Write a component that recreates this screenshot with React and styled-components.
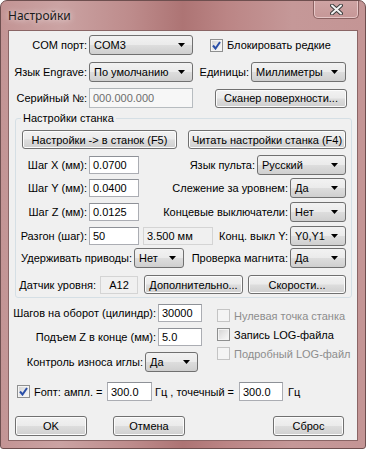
import React from "react";
import styled, { createGlobalStyle } from "styled-components";

const GlobalStyle = createGlobalStyle`
  html, body {
    margin: 0;
    padding: 0;
    background: #ffffff;
  }
  body {
    font-family: "Liberation Sans", Arial, sans-serif;
    font-size: 11px;
    color: #000000;
  }
`;

const Window = styled.div`
  width: 366px;
  height: 449px;
  box-sizing: border-box;
  border: 1px solid #6e4f4f;
  border-radius: 7px 7px 3px 3px;
  background: linear-gradient(
    90deg,
    #c39494 0%,
    #cba3a3 16%,
    #bd8b8b 36%,
    #ad7474 50%,
    #bb8585 62%,
    #c59898 80%,
    #c49595 100%
  );
  display: flex;
  flex-direction: column;
  overflow: hidden;
`;

const TitleBar = styled.div`
  height: 29px;
  display: flex;
  justify-content: space-between;
  align-items: flex-start;
`;

const Title = styled.div`
  padding-left: 7px;
  line-height: 29px;
  font-family: "Noto Sans", "Open Sans", sans-serif;
  font-size: 12px;
  color: #1a1a1a;
  text-shadow: 0 0 6px rgba(255, 255, 255, 0.9);
`;

const CloseButton = styled.div`
  width: 46px;
  height: 19px;
  margin: -1px 6px 0 0;
  box-sizing: border-box;
  border: 1px solid #8b6262;
  border-top: none;
  border-radius: 0 0 5px 5px;
  box-shadow: inset 0 0 0 1px rgba(255, 235, 235, 0.55);
  background: linear-gradient(180deg, #cfa4a4 0%, #c69797 100%);
  display: flex;
  align-items: center;
  justify-content: center;
`;

const Client = styled.div`
  margin: 0 7px;
  width: 350px;
  height: 411px;
  box-sizing: border-box;
  border: 1px solid #8a6565;
  background: #f0f0f0;
  display: flex;
  flex-direction: column;
`;

const Row = styled.div`
  display: flex;
  align-items: center;
  height: ${(p) => p.$h || 20}px;
  margin-top: ${(p) => p.$mt || 0}px;
  padding-left: ${(p) => p.$pl || 0}px;
`;

const Label = styled.div`
  flex: none;
  width: ${(p) => (p.$w ? `${p.$w}px` : "auto")};
  display: flex;
  justify-content: flex-end;
  padding-right: 2px;
  box-sizing: border-box;
  white-space: nowrap;
  color: ${(p) => (p.$disabled ? "#6d6d6d" : "#000000")};
`;

const Text = styled.span`
  flex: none;
  width: ${(p) => (p.$w ? `${p.$w}px` : "auto")};
  margin-left: ${(p) => p.$ml || 0}px;
  white-space: nowrap;
`;

const Right = styled.div`
  margin-left: auto;
  display: flex;
  align-items: center;
`;

const Combo = styled.div`
  flex: none;
  width: ${(p) => p.$w}px;
  height: 20px;
  box-sizing: border-box;
  border: 1px solid #707070;
  border-radius: 3px;
  background: linear-gradient(180deg, #f2f2f2 0%, #ebebeb 48%, #dddddd 52%, #cfcfcf 100%);
  display: flex;
  align-items: center;
  justify-content: space-between;
  padding: 0 7px 0 4px;
`;

const TextBox = styled.div`
  flex: none;
  width: ${(p) => p.$w}px;
  height: ${(p) => p.$h || 18}px;
  box-sizing: border-box;
  border: 1px solid ${(p) => (p.$disabled ? "#b7bcc0" : "#abadb3")};
  border-top-color: ${(p) => (p.$disabled ? "#adb2b5" : "#8e9197")};
  background: ${(p) => (p.$disabled ? "#f7f7f7" : "#ffffff")};
  color: ${(p) => (p.$disabled ? "#6d6d6d" : "#000000")};
  display: flex;
  align-items: center;
  padding-left: 3px;
  margin-left: ${(p) => p.$ml || 0}px;
`;

const StaticBox = styled.div`
  flex: none;
  width: ${(p) => p.$w}px;
  height: 18px;
  box-sizing: border-box;
  border: 1px solid #d4d4d4;
  background: #f0f0f0;
  display: flex;
  align-items: center;
  justify-content: ${(p) => (p.$center ? "center" : "flex-start")};
  padding-left: ${(p) => (p.$center ? 0 : 3)}px;
  margin-left: ${(p) => p.$ml || 0}px;
`;

const Button = styled.div`
  flex: none;
  width: ${(p) => p.$w}px;
  height: ${(p) => p.$h || 19}px;
  margin-left: ${(p) => (p.$auto ? "auto" : `${p.$ml || 0}px`)};
  margin-right: ${(p) => p.$mr || 0}px;
  box-sizing: border-box;
  border: 1px solid #707070;
  border-radius: 3px;
  box-shadow: inset 0 0 0 1px #fcfcfc;
  background: linear-gradient(180deg, #f2f2f2 0%, #ebebeb 48%, #dddddd 52%, #cfcfcf 100%);
  display: flex;
  align-items: center;
  justify-content: center;
  white-space: nowrap;
`;

const Check = styled.label`
  display: flex;
  align-items: center;
  height: 13px;
  margin-top: ${(p) => p.$mt || 0}px;
  color: ${(p) => (p.$disabled ? "#8d8d8d" : "#000000")};
  white-space: nowrap;
`;

const Box = styled.span`
  flex: none;
  width: 13px;
  height: 13px;
  box-sizing: border-box;
  margin-right: 4px;
  border: 1px solid ${(p) => (p.$disabled ? "#c4c4c4" : "#8e8f8f")};
  background: ${(p) =>
    p.$disabled
      ? "#f4f4f4"
      : "linear-gradient(135deg, #d2d2d2 0%, #e8e8e8 50%, #fafafa 100%)"};
  box-shadow: inset 0 0 0 1px #f4f4f4;
  display: flex;
  align-items: center;
  justify-content: center;
`;

const Group = styled.fieldset`
  margin: 4px 0 0 6px;
  width: 337px;
  box-sizing: border-box;
  border: 1px solid #d5dfe5;
  border-radius: 3px;
  padding: 0 5px 3px 6px;
  min-width: 0;
`;

const Legend = styled.legend`
  padding: 0 2px;
  margin-left: -1px;
  line-height: 13px;
  font-size: 11px;
`;

const Columns = styled.div`
  display: flex;
  align-items: flex-start;
`;

const LeftCol = styled.div`
  width: 193px;
  display: flex;
  flex-direction: column;
`;

const RightCol = styled.div`
  padding-left: 15px;
  padding-top: 11px;
  display: flex;
  flex-direction: column;
  gap: 6px;
`;

const Arrow = () => (
  <svg width="7" height="4" viewBox="0 0 7 4">
    <polygon points="0,0 7,0 3.5,4" fill="#000" />
  </svg>
);

const Tick = () => (
  <svg width="9" height="9" viewBox="0 0 9 9">
    <path d="M1 4.5 L3.5 7.5 L8 1" stroke="#2a4fa8" strokeWidth="2" fill="none" />
  </svg>
);

const Select = ({ w, value }) => (
  <Combo $w={w}>
    <span>{value}</span>
    <Arrow />
  </Combo>
);

const CheckBox = ({ checked, disabled, label, mt }) => (
  <Check $disabled={disabled} $mt={mt}>
    <Box $disabled={disabled}>{checked && <Tick />}</Box>
    {label}
  </Check>
);

export default function App() {
  return (
    <>
      <GlobalStyle />
      <Window>
        <TitleBar>
          <Title>Настройки</Title>
          <CloseButton>
            <svg width="13" height="11" viewBox="0 0 13 11">
              <path d="M2 1.5 L11 9.5 M11 1.5 L2 9.5" stroke="#3d3d3d" strokeWidth="4" strokeLinecap="round" />
              <path d="M2 1.5 L11 9.5 M11 1.5 L2 9.5" stroke="#f2f2f2" strokeWidth="2" strokeLinecap="round" />
            </svg>
          </CloseButton>
        </TitleBar>
        <Client>
          <Row $mt={4}>
            <Label $w={80}>COM порт:</Label>
            <Select w={104} value="COM3" />
            <Text $ml={17}>
              <CheckBox checked label="Блокировать редкие" />
            </Text>
          </Row>
          <Row $mt={7}>
            <Label $w={80}>Язык Engrave:</Label>
            <Select w={104} value="По умолчанию" />
            <Label $w={58}>Единицы:</Label>
            <Select w={95} value="Миллиметры" />
          </Row>
          <Row $mt={6}>
            <Label $w={80}>Серийный №:</Label>
            <TextBox $w={104} $h={20} $disabled>000.000.000</TextBox>
            <Button $w={132} $ml={22}>Сканер поверхности...</Button>
          </Row>

          <Group>
            <Legend>Настройки станка</Legend>
            <Row $mt={5} $h={19}>
              <Button $w={155}>Настройки -&gt; в станок (F5)</Button>
              <Button $w={158} $auto>Читать настройки станка (F4)</Button>
            </Row>
            <Row $mt={6}>
              <Label $w={67}>Шаг X (мм):</Label>
              <TextBox $w={50}>0.0700</TextBox>
              <Right>
                <Label>Язык пульта:</Label>
                <Select w={89} value="Русский" />
              </Right>
            </Row>
            <Row $mt={3}>
              <Label $w={67}>Шаг Y (мм):</Label>
              <TextBox $w={50}>0.0400</TextBox>
              <Right>
                <Label>Слежение за уровнем:</Label>
                <Select w={56} value="Да" />
              </Right>
            </Row>
            <Row $mt={4}>
              <Label $w={67}>Шаг Z (мм):</Label>
              <TextBox $w={50}>0.0125</TextBox>
              <Right>
                <Label>Концевые выключатели:</Label>
                <Select w={56} value="Нет" />
              </Right>
            </Row>
            <Row $mt={4}>
              <Label $w={67}>Разгон (шаг):</Label>
              <TextBox $w={50}>50</TextBox>
              <StaticBox $w={70} $ml={4}>3.500 мм</StaticBox>
              <Right>
                <Label>Конц. выкл Y:</Label>
                <Select w={56} value="Y0,Y1" />
              </Right>
            </Row>
            <Row $mt={2}>
              <Label $w={112}>Удерживать приводы:</Label>
              <Select w={50} value="Нет" />
              <Right>
                <Label>Проверка магнита:</Label>
                <Select w={56} value="Да" />
              </Right>
            </Row>
            <Row $mt={7} $h={19}>
              <Label $w={76}>Датчик уровня:</Label>
              <StaticBox $w={38} $ml={2} $center>A12</StaticBox>
              <Button $w={99} $ml={6}>Дополнительно...</Button>
              <Button $w={98} $auto>Скорости...</Button>
            </Row>
          </Group>

          <Columns>
            <LeftCol>
              <Row $mt={6} $h={18}>
                <Label $w={149}>Шагов на оборот (цилиндр):</Label>
                <TextBox $w={44}>30000</TextBox>
              </Row>
              <Row $mt={6} $h={18}>
                <Label $w={149}>Подъем Z в конце (мм):</Label>
                <TextBox $w={44}>5.0</TextBox>
              </Row>
              <Row $mt={6}>
                <Label $w={136}>Контроль износа иглы:</Label>
                <Select w={53} value="Да" />
              </Row>
            </LeftCol>
            <RightCol>
              <CheckBox disabled label="Нулевая точка станка" />
              <CheckBox label="Запись LOG-файла" />
              <CheckBox disabled label="Подробный LOG-файл" />
            </RightCol>
          </Columns>

          <Row $mt={10} $h={19} $pl={8}>
            <Text $w={90}>
              <CheckBox checked label="Fопт: ампл. =" />
            </Text>
            <TextBox $w={45} $h={19}>300.0</TextBox>
            <Text $w={84} $ml={3}>Гц , точечный =</Text>
            <TextBox $w={44} $h={19}>300.0</TextBox>
            <Text $ml={5}>Гц</Text>
          </Row>

          <Row $mt={15} $pl={6}>
            <Button $w={72} $h={20}>OK</Button>
            <Button $w={72} $h={20} $ml={26}>Отмена</Button>
            <Button $w={71} $h={20} $auto $mr={13}>Сброс</Button>
          </Row>
        </Client>
      </Window>
    </>
  );
}
